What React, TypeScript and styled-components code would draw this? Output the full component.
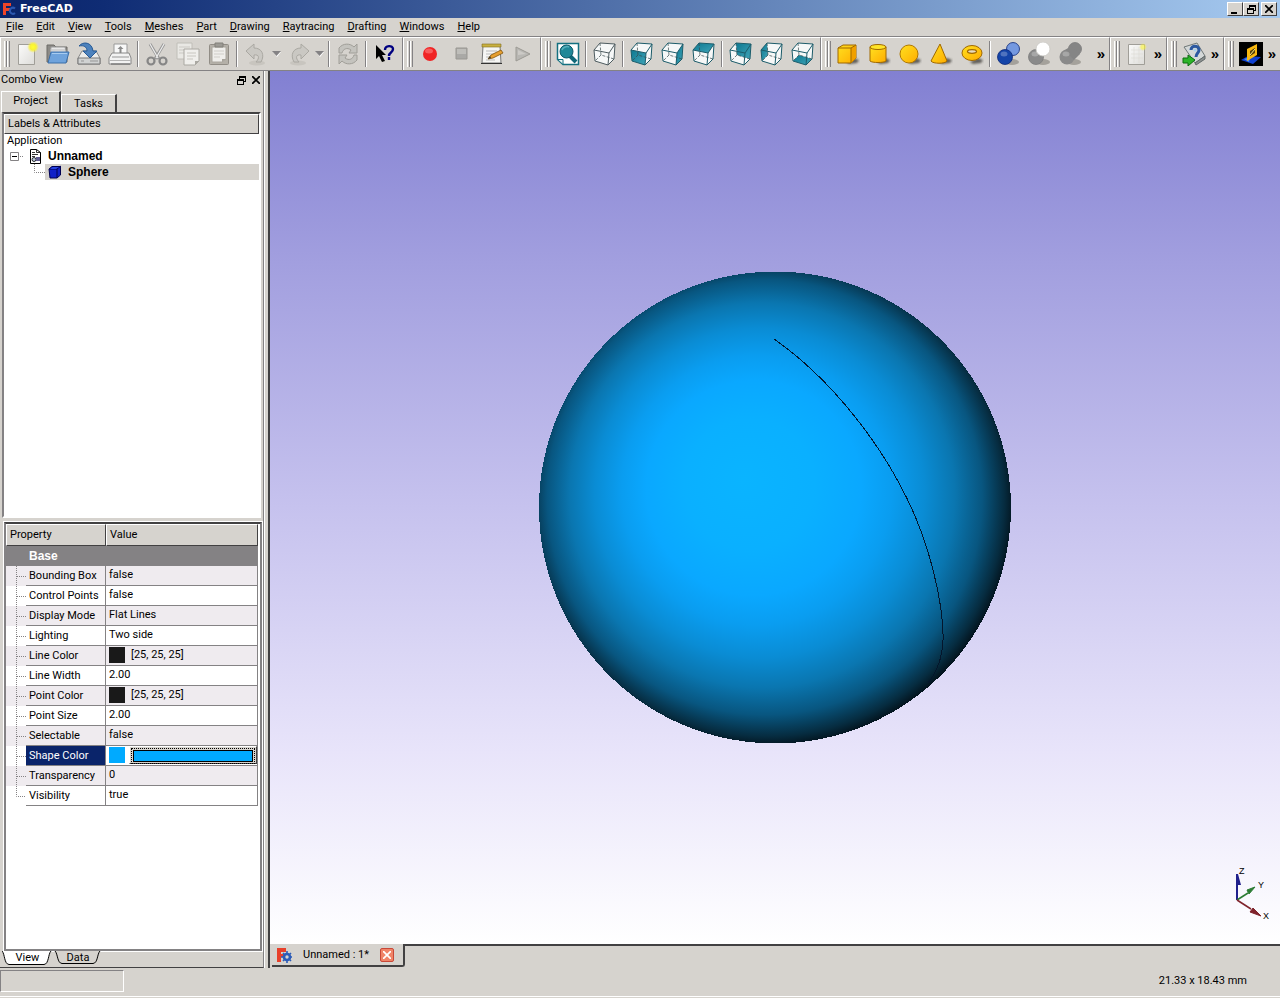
import React from "react";
import styled, { createGlobalStyle, css } from "styled-components";

const face = "#d6d3ce";
const shade = "#848284";
const dark = "#424142";
const navy = "#0a246a";

const GlobalStyle = createGlobalStyle`
  * { box-sizing: border-box; }
  body { margin: 0; background: ${face}; }
  body, button, table { font-family: Roboto, "Liberation Sans", sans-serif; font-size: 11px; line-height: 16px; color: #000; }
  button { margin: 0; padding: 0; border: 0; background: none; }
  svg { display: block; flex: none; }
`;

const Window = styled.div`
  display: flex;
  flex-direction: column;
  min-height: 100vh;
  background: ${face};
`;

const TitleBar = styled.header`
  display: flex;
  align-items: center;
  height: 18px;
  padding: 0 3px 0 2px;
  gap: 4px;
  background: linear-gradient(90deg, #0a246a 0%, #0f2c74 8%, #a6caf0 100%);
`;

const AppTitle = styled.h1`
  flex: 1;
  margin: 0;
  font: bold 11px/18px "DejaVu Sans", sans-serif;
  color: #fff;
`;

const WindowButtons = styled.div`
  display: flex;
`;

const WindowButton = styled.button<{ $apart?: boolean }>`
  display: grid;
  place-items: center;
  width: 16px;
  height: 14px;
  margin-left: ${(p) => (p.$apart ? 2 : 0)}px;
  background: ${face};
  border: 1px solid;
  border-color: #fff ${dark} ${dark} #fff;
`;

const MenuBar = styled.nav`
  display: flex;
  height: 18px;
  padding-left: 6px;
  gap: 13px;
`;

const MenuButton = styled.button`
  height: 18px;
  line-height: 18px;
  &::first-letter { text-decoration: underline; }
`;

const ToolbarArea = styled.div`
  display: flex;
  height: 35px;
  border-top: 1px solid ${shade};
  border-bottom: 1px solid ${shade};
`;

const ToolGroup = styled.div<{ $grow?: boolean }>`
  display: flex;
  align-items: center;
  flex: ${(p) => (p.$grow ? "1 0 auto" : "none")};
  padding-right: 2px;
  border-top: 1px solid #fff;
  border-left: 1px solid #fff;
  border-right: 1px solid ${shade};
  &:last-child { border-right: 0; }
`;

const Grip = styled.span`
  width: 6px;
  height: 26px;
  margin: 0 1px 0 3px;
  border: solid #fff;
  border-width: 0 0 0 1px;
  background: linear-gradient(90deg, ${face} 1px, ${shade} 1px 2px, #fff 2px 3px, ${face} 3px 4px, ${shade} 4px);
`;

const ToolButton = styled.button`
  display: grid;
  place-items: center;
  width: 31px;
  height: 30px;
`;

const DropButton = styled.button`
  display: grid;
  place-items: center;
  width: 12px;
  height: 30px;
`;

const MoreButton = styled.button`
  width: 12px;
  height: 30px;
  margin-left: auto;
  font: bold 15px/26px "Liberation Sans", sans-serif;
`;

const Separator = styled.span`
  width: 2px;
  height: 26px;
  margin: 0 2px;
  border-left: 1px solid ${shade};
  border-right: 1px solid #fff;
`;

const Workspace = styled.div`
  flex: 1;
  display: flex;
`;

const Dock = styled.aside`
  display: flex;
  flex-direction: column;
  width: 264px;
  flex: none;
  border-right: 1px solid ${shade};
  border-bottom: 1px solid ${dark};
`;

const DockTitle = styled.div`
  display: flex;
  align-items: center;
  height: 20px;
  padding: 0 3px 2px 1px;
  gap: 6px;
`;

const DockName = styled.h2`
  flex: 1;
  margin: 0;
  font-size: 11px;
  font-weight: 400;
  line-height: 18px;
`;

const DockTabs = styled.div`
  display: flex;
  align-items: flex-end;
  height: 21px;
  padding-left: 1px;
`;

const DockTab = styled.button<{ $active?: boolean }>`
  width: ${(p) => (p.$active ? 60 : 56)}px;
  height: ${(p) => (p.$active ? 21 : 18)}px;
  padding-bottom: ${(p) => (p.$active ? 2 : 0)}px;
  border: solid;
  border-width: 1px 2px 0 1px;
  border-color: #fff ${dark} ${face} #fff;
`;

const TreeFrame = styled.section`
  flex: 405 1 0;
  margin: 0 2px 0 2px;
  background: #fff;
  border: 2px solid;
  border-color: ${dark} #fff #fff ${shade};
`;

const TreeHeader = styled.div`
  height: 20px;
  padding-left: 3px;
  line-height: 18px;
  background: ${face};
  border: 1px solid;
  border-color: #fff ${dark} ${dark} #fff;
`;

const TreeList = styled.ul`
  margin: 0;
  padding: 0;
  list-style: none;
`;

const TreeRow = styled.li<{ $bold?: boolean }>`
  display: flex;
  align-items: center;
  height: ${(p) => (p.$bold ? 16 : 14)}px;
  padding-left: 3px;
  ${(p) => p.$bold && css`font: bold 12px/16px "Liberation Sans", sans-serif;`}
`;

const TreeLabel = styled.span<{ $selected?: boolean }>`
  display: flex;
  flex: 1;
  align-items: center;
  gap: 6px;
  padding-left: 3px;
  background: ${(p) => (p.$selected ? face : "transparent")};
`;

const PropertyFrame = styled.section`
  flex: 429 1 0;
  margin: 4px 1px 0 4px;
  padding-right: 1px;
  background: #fff;
  border: 2px solid;
  border-color: ${dark} ${shade} ${shade} ${shade};
  box-shadow: 0 0 0 1px #fff;
`;

const PropertyTable = styled.table`
  width: calc(100% - 1px);
  table-layout: fixed;
  border-collapse: separate;
  border-spacing: 0;
`;

const HeadCell = styled.th<{ $first?: boolean }>`
  width: ${(p) => (p.$first ? "100px" : "auto")};
  height: 22px;
  padding: 0 0 0 3px;
  font-weight: 400;
  text-align: left;
  background: ${face};
  border: 1px solid;
  border-color: #fff ${dark} ${dark} #fff;
`;

const GroupCell = styled.th`
  height: 20px;
  padding: 0 0 0 23px;
  font: bold 12px/16px "Liberation Sans", sans-serif;
  text-align: left;
  color: #fff;
  background: ${shade};
`;

const PropertyRow = styled.tr<{ $alt: boolean }>`
  background: ${(p) => (p.$alt ? "#efebef" : "#fff")};
`;

const NameCell = styled.th`
  height: 20px;
  padding: 0;
  font-weight: 400;
  text-align: left;
`;

const NameLine = styled.div`
  display: flex;
  height: 20px;
`;

const PropertyName = styled.span<{ $selected?: boolean }>`
  flex: 1;
  height: 20px;
  padding-left: 3px;
  line-height: 20px;
  white-space: nowrap;
  border-right: 1px solid ${shade};
  border-bottom: 1px solid ${shade};
  ${(p) =>
    p.$selected &&
    css`
      color: #fff;
      background: ${navy};
    `}
`;

const ValueCell = styled.td`
  height: 20px;
  padding: 0;
  border-right: 1px solid ${shade};
  border-bottom: 1px solid ${shade};
`;

const ValueLine = styled.div`
  display: flex;
  align-items: center;
  height: 19px;
  padding-left: 3px;
  line-height: 20px;
`;

const Swatch = styled.span<{ $color: string }>`
  width: 16px;
  height: 16px;
  margin-right: 6px;
  background: ${(p) => p.$color};
`;

const ColorButton = styled.button<{ $color: string }>`
  flex: 1;
  height: 18px;
  margin-left: -2px;
  padding: 3px;
  border: 1px solid;
  border-color: #fff ${dark} ${dark} #fff;
  background: ${face};
  &::before {
    content: "";
    display: block;
    height: 10px;
    background: ${(p) => p.$color};
    border: 1px solid #000;
    outline: 1px dotted #000;
    outline-offset: 1px;
  }
`;

const SheetTabs = styled.div`
  display: flex;
  height: 16px;
  padding-left: 2px;
`;

const SheetTab = styled.button<{ $active?: boolean }>`
  display: grid;
  width: ${(p) => (p.$active ? 51 : 50)}px;
  height: ${(p) => (p.$active ? 15 : 14)}px;
  > * { grid-area: 1 / 1; }
  > span { line-height: 14px; }
`;

const Splitter = styled.div`
  width: 6px;
  flex: none;
  border-left: 1px solid #fff;
  border-right: 2px solid ${dark};
`;

const Documents = styled.main`
  flex: 1;
  display: flex;
  flex-direction: column;
  min-width: 0;
`;

const Viewport = styled.div`
  position: relative;
  flex: 1;
  display: flex;
  align-items: center;
  justify-content: center;
  background: linear-gradient(#8280d2, #a29fdf 22%, #c6c2ee 50%, #e8e4fa 78%, #fff 100%);
`;

const AxisCross = styled.svg`
  position: absolute;
  right: 4px;
  bottom: 22px;
`;

const DocumentTabs = styled.div`
  display: flex;
  height: 24px;
  padding-left: 2px;
`;

const DocumentTab = styled.div`
  display: flex;
  align-items: center;
  width: 133px;
  height: 23px;
  padding-left: 4px;
  gap: 11px;
  border-right: 2px solid ${dark};
  border-bottom: 2px solid ${dark};
  border-radius: 0 0 3px 0;
`;

const DocumentTabFill = styled.div`
  flex: 1;
  border-top: 2px solid ${dark};
`;

const CloseButton = styled.button`
  display: grid;
  place-items: center;
  width: 14px;
  height: 14px;
  background: #f08468;
  border: 1px solid #c84838;
  border-radius: 2px;
`;

const StatusBar = styled.footer`
  display: flex;
  justify-content: space-between;
  align-items: center;
  height: 30px;
  padding: 2px 33px 5px 0;
  border-bottom: 1px solid ${face};
  box-shadow: inset 0 -1px 0 #fff;
`;

const StatusField = styled.div`
  width: 124px;
  height: 22px;
  border: 1px solid;
  border-color: ${shade} #fff #fff ${shade};
`;

/* ---------- icons ---------- */

const Icon = ({ children, size = 24 }: { children: React.ReactNode; size?: number }) => (
  <svg width={size} height={size} viewBox="0 0 24 24" aria-hidden="true">
    {children}
  </svg>
);

const AppLogo = ({ size = 15 }: { size?: number }) => (
  <svg width={size} height={size} viewBox="0 0 16 16" aria-hidden="true">
    <path d="M1 1h9v4H5v2h4v3H5v5H1z" fill="#e8402a" />
    <circle cx="11" cy="10" r="3" fill="none" stroke="#2c5cb8" strokeWidth="2.6" />
    <path d="M11 4v3M11 13v3M5 10h3M14 10h2M7 6l2 2M13 12l2 2M15 6l-2 2M7 14l2-2" stroke="#2c5cb8" strokeWidth="1.6" />
  </svg>
);

/* The title bar shows the mark as a red F with a dark blue ring. */
const TitleLogo = () => (
  <svg width="14" height="14" viewBox="0 0 14 14" aria-hidden="true">
    <path d="M1 1h8v3H4v2h4v3H4v4H1z" fill="#f04428" />
    <path d="M13 6.500a3 3 0 1 0 0 4.500" fill="none" stroke="#2c58b0" strokeWidth="2" />
  </svg>
);

const NewIcon = ({ faded }: { faded?: boolean }) => (
  <Icon>
    <defs>
      <radialGradient id="glow">
        <stop offset="0" stopColor="#ffff30" />
        <stop offset=".5" stopColor="#f8f038" />
        <stop offset="1" stopColor="#f8f060" stopOpacity="0" />
      </radialGradient>
      <linearGradient id="paper" x1="0" y1="0" x2="1" y2="1">
        <stop offset="0" stopColor="#fbfbfa" />
        <stop offset="1" stopColor="#dddcd9" />
      </linearGradient>
    </defs>
    <path d="M3.500 2.500h16v20h-16z" fill="url(#paper)" stroke="#a09e98" />
    {faded && <path d="M6 8h12M6 12h12M6 16h12M9 5v16M14 5v16" stroke="#dcdad4" strokeWidth=".6" />}
    <circle cx="18" cy="5" r={faded ? 4 : 6} fill="url(#glow)" opacity={faded ? 0.6 : 1} />
  </Icon>
);

const OpenIcon = () => (
  <Icon>
    <path d="M1 20V3h7l2 2h11v15z" fill="#8c8a86" stroke="#6c6a66" />
    <path d="M5 5h14l2 8H4z" fill="#e8e8e8" stroke="#9a9a9a" />
    <path d="M4 8h15" stroke="#bbb" />
    <path d="M5 10h18l-3 11H2z" fill="#6fa3dc" stroke="#3a6ea8" />
    <path d="M6 11.500h15" stroke="#a8ccf0" />
  </Icon>
);

const SaveIcon = () => (
  <Icon>
    <path d="M5 9h14l4 7v6H1v-6z" fill="#ececea" stroke="#888" />
    <path d="M1 16h22v6H1z" fill="#d0d2d2" stroke="#777" />
    <path d="M13 19h8M4 19h3" stroke="#959595" />
    <path d="M2 4C6-1 15 0 16 9h4l-7 7-7-7h4C10 5 7 3 2 4z" fill="#4d82bd" stroke="#275a96" />
  </Icon>
);

const PrintIcon = () => (
  <Icon>
    <path d="M6 12V2h13v10" fill="#f8f8f8" stroke="#999" />
    <path d="M12.500 4l3 3h-2v4h-2V7h-2z" fill="#8a8a8a" />
    <path d="M4 11h17l2 5v6H1v-6z" fill="#f2f2f2" stroke="#888" />
    <path d="M4 14h17v2H4z" fill="#c4c4c4" />
    <path d="M2 18.500h21" stroke="#b4b4b4" />
    <path d="M3 22h19" stroke="#666" />
  </Icon>
);

const CutIcon = () => (
  <Icon>
    <path d="M5 2l9 15M19 2l-9 15" stroke="#979797" strokeWidth="3" />
    <path d="M5 2l8 14M19 2l-8 14" stroke="#ededed" strokeWidth="1.200" />
    <circle cx="6" cy="19" r="3.500" fill="none" stroke="#868686" strokeWidth="2.200" />
    <circle cx="18" cy="19" r="3.500" fill="none" stroke="#868686" strokeWidth="2.200" />
  </Icon>
);

const CopyIcon = () => (
  <Icon>
    <path d="M1 1h15v16H1z" fill="#e9e8e4" stroke="#c0beb8" />
    <path d="M3 5h11M3 8h11M3 11h6" stroke="#cbc9c4" />
    <path d="M8 7h15v12l-4 4H8z" fill="#f0efec" stroke="#aaa8a2" />
    <path d="M11 11h9M11 14h9M11 17h6" stroke="#c8c6c0" />
    <path d="M23 19h-4v4z" fill="#aaa8a2" />
  </Icon>
);

const PasteIcon = () => (
  <Icon>
    <rect x="2.500" y="2.500" width="19" height="20" rx="1" fill="#b4b0a8" stroke="#918d86" />
    <path d="M5 5h14v12l-4 3H5z" fill="#efeeeb" stroke="#aaa69e" />
    <path d="M8 1h8v4H8z" fill="#9c9a94" stroke="#82807a" />
    <path d="M7 9h10M7 12h10M7 15h6" stroke="#cfcdc8" />
    <path d="M19 17h-4v3z" fill="#a8a49c" />
  </Icon>
);

const UndoIcon = ({ flip }: { flip?: boolean }) => (
  <Icon>
    <g transform={flip ? "translate(24 0) scale(-1 1)" : undefined}>
      <ellipse cx="13" cy="21" rx="8" ry="2.500" fill="#c8c5bf" />
      <path d="M2 9l8-7v4c8 0 11 7 7 14h-5c4-4 3-8-2-7v4z" fill="#cac8c3" stroke="#aaa8a2" />
    </g>
  </Icon>
);

const DropIcon = () => (
  <svg width="10" height="6" viewBox="0 0 10 6" aria-hidden="true">
    <path d="M1 1l4 5 4-5z" fill="#fff" />
    <path d="M0 0h9L4.500 5z" fill="#848284" />
  </svg>
);

const RefreshIcon = () => (
  <Icon>
    <path d="M3 11V6c4-5 11-5 15-1l3-3v9h-8l2-3c-4-3-8-1-9 3z" fill="#c4c3be" stroke="#a09e98" />
    <path d="M21 13v5c-4 5-11 5-15 1l-3 3v-9h8l-2 3c4 3 8 1 9-3z" fill="#c4c3be" stroke="#a09e98" />
  </Icon>
);

const HelpIcon = () => (
  <Icon>
    <path d="M3 3v14l3-3 3 6 3-1-3-6h4z" fill="#000" />
    <path d="M12 8c0-5 8-5 8-1 0 4-4 3-4 7M16 15v3" fill="none" stroke="#000080" strokeWidth="2.400" />
  </Icon>
);

const RecordIcon = () => (
  <Icon>
    <circle cx="12" cy="12" r="7" fill="#f02424" />
    <ellipse cx="11" cy="9" rx="4" ry="2.500" fill="#f85c5c" />
  </Icon>
);

const StopIcon = () => (
  <Icon>
    <path d="M7 6h11v11H7z" fill="#aaa9a6" stroke="#999792" />
    <path d="M8 7h9v5H8z" fill="#bfbeba" />
  </Icon>
);

const MacroIcon = () => (
  <Icon>
    <path d="M3 4h17l1 17H2z" fill="#f6f6f4" stroke="#777" />
    <path d="M2 2h19v3H2z" fill="#c8b040" stroke="#806c20" strokeWidth=".6" />
    <path d="M6 9h11M6 12h9M6 15h5M6 18h9" stroke="#bbb" />
    <path d="M1 21.500h21" stroke="#333" />
    <path d="M8 17l3-4 10-5 2 3-10 5z" fill="#e8a030" stroke="#80540c" strokeWidth=".8" />
    <path d="M8 17l2-3 1 2z" fill="#333" />
  </Icon>
);

const PlayIcon = () => (
  <Icon>
    <path d="M5 5l14 7-14 7z" fill="#b8b7b3" stroke="#9c9a94" />
    <path d="M7 8l8 4-8 1z" fill="#cccac6" />
  </Icon>
);

const FitIcon = () => (
  <Icon>
    <path d="M1.500 1.500h21v21H7l-5.500-5z" fill="#fff" stroke="#147080" strokeWidth="1.500" />
    <path d="M1.500 17.500H7v5z" fill="#e8f4f4" stroke="#147080" />
    <path d="M14 14l6 6" stroke="#106878" strokeWidth="4" />
    <circle cx="10.500" cy="9.500" r="6.500" fill="#208898" stroke="#0c5868" />
    <path d="M6 8c1-3 5-4 7-3" fill="none" stroke="#58b0bc" strokeWidth="1.500" />
  </Icon>
);

const cubeFaces = {
  front: "M1 8 16 11 15 23 2 19z",
  right: "M16 11 22 2 21 17 15 23z",
  top: "M1 8 7 1 22 2 16 11z",
  rear: "M7 1 22 2 21 17 8 13z",
  left: "M1 8 7 1 8 13 2 19z",
  bottom: "M2 19 8 13 21 17 15 23z",
};

/* A wireframe cube with one face filled. */
const ViewCube = ({ side }: { side?: keyof typeof cubeFaces }) => (
  <Icon>
    <defs>
      <linearGradient id="teal" x1="0" y1="0" x2="1" y2="1">
        <stop offset="0" stopColor="#0c7890" />
        <stop offset="1" stopColor="#40a4b8" />
      </linearGradient>
    </defs>
    <path d="M1 8 7 1 22 2 21 17 15 23 2 19z" fill="#f6f8f8" />
    {side && <path d={cubeFaces[side]} fill="url(#teal)" />}
    <path d="M7 1 8 13 21 17M8 13 2 19" fill="none" stroke="#36474a" strokeWidth=".7" strokeDasharray="3 1.500" />
    <path
      d="M1 8 7 1 22 2 21 17 15 23 2 19zM1 8 16 11 22 2M16 11 15 23"
      fill="none"
      stroke={side ? "#1c5c6a" : "#4e5c60"}
    />
  </Icon>
);

const PartDefs = () => (
  <defs>
    <linearGradient id="gold" x1="0" y1="0" x2="1" y2="1">
      <stop offset="0" stopColor="#ffe020" />
      <stop offset="1" stopColor="#ffac00" />
    </linearGradient>
    <filter id="soft" x="-20%" y="-20%" width="140%" height="140%">
      <feGaussianBlur stdDeviation=".8" />
    </filter>
  </defs>
);

const Shadow = () => <path d="M10 20l8-4 5 2-2 3-8 1z" fill="#44423e" opacity=".8" filter="url(#soft)" />;

const BoxIcon = () => (
  <Icon>
    <PartDefs />
    <Shadow />
    <path d="M2 6 7 3h13v13l-5 5H2z" fill="url(#gold)" stroke="#a06800" />
    <path d="M15 6l5-3v13l-5 5z" fill="#f0a000" />
    <path d="M2 6h13v15M15 6l5-3" fill="none" stroke="#a06800" />
  </Icon>
);

const CylinderIcon = () => (
  <Icon>
    <Shadow />
    <path d="M3 5v14c2 2 14 2 16 0V5z" fill="url(#gold)" stroke="#a06800" />
    <ellipse cx="11" cy="5" rx="8" ry="2.500" fill="#ffe428" stroke="#a06800" />
  </Icon>
);

const SphereIcon = () => (
  <Icon>
    <Shadow />
    <circle cx="11" cy="12" r="9" fill="url(#gold)" stroke="#b07800" />
  </Icon>
);

const ConeIcon = () => (
  <Icon>
    <Shadow />
    <path d="M11 2 2 19c2 3 14 3 16 0z" fill="url(#gold)" stroke="#a06800" />
  </Icon>
);

const TorusIcon = () => (
  <Icon>
    <Shadow />
    <ellipse cx="12" cy="11" rx="10" ry="7.500" fill="url(#gold)" stroke="#a06800" />
    <ellipse cx="12" cy="9.500" rx="4.500" ry="1.800" fill="#e8dcc0" stroke="#a06800" strokeWidth="1.300" />
  </Icon>
);

const BooleanIcon = ({ kind }: { kind: "union" | "cut" | "fuse" }) => {
  const back = kind === "union" ? "#7498e0" : kind === "cut" ? "#fff" : "#858585";
  const front = kind === "union" ? "#1444a8" : "#8a8a8a";
  const line = kind === "union" ? "#0c2878" : "#7c7c7c";
  return (
    <Icon>
      <ellipse cx="15" cy="20" rx="7" ry="3" fill="#a4a19b" />
      {kind !== "cut" && <circle cx="16" cy="7" r="6.500" fill={back} stroke={line} strokeWidth=".8" />}
      <circle cx="8" cy="15" r="7.500" fill={front} stroke={kind === "fuse" ? "none" : line} strokeWidth=".8" />
      {kind === "fuse" && <path d="M6 8l6-4 9 8-6 6z" fill="#858585" />}
      <ellipse cx="7" cy="12" rx="3.500" ry="2.500" fill="#fff" opacity=".25" />
      {kind === "cut" && <circle cx="15" cy="7" r="7" fill={back} stroke="#c8c6c2" strokeWidth=".8" />}
    </Icon>
  );
};

const ExportIcon = () => (
  <Icon>
    <path d="M2 5l13-4 8 13-10 7z" fill="#d4d8d8" stroke="#707878" />
    <path d="M13 21l10-7v3l-9 6z" fill="#8c9090" stroke="#606868" />
    <path d="M9 8c0-5 8-5 8 0 0 3-3 3-3 7" fill="none" stroke="#2c58a0" strokeWidth="3" />
    <circle cx="13" cy="8" r="1.500" fill="#a8d0f0" />
    <path d="M1 16h5v-3l7 5-7 6v-3H1z" fill="#2cb428" stroke="#0c6c10" />
  </Icon>
);

const DrawIcon = () => (
  <Icon>
    <path d="M0 0h24v24H0z" fill="#000" />
    <path d="M2 18l7-4 13 1-8 7z" fill="#1040d0" />
    <path d="M5 17 11 15 10 20z" fill="#4890f8" />
    <path d="M8 7 18 2v11L8 19z" fill="#f8b810" />
    <path d="M11 9 16 6v5l-5 3z" fill="#584008" />
    <path d="M11 13l5-6" stroke="#fff080" />
  </Icon>
);

const RestoreGlyph = () => (
  <svg width="9" height="9" viewBox="0 0 9 9" aria-hidden="true" shapeRendering="crispEdges">
    <path d="M2 0h7v6H7V5h1V2H3v1H2z" />
    <path d="M0 3h7v6H0zM1 5v3h5V5z" fillRule="evenodd" />
  </svg>
);

const CloseGlyph = ({ color = "#000" }: { color?: string }) => (
  <svg width="8" height="8" viewBox="0 0 8 8" aria-hidden="true">
    <path d="M0 0l8 8M8 0l-8 8" stroke={color} strokeWidth="1.700" />
  </svg>
);

const MinimizeGlyph = () => (
  <svg width="8" height="9" viewBox="0 0 8 9" aria-hidden="true">
    <path d="M0 7h6v2H0z" />
  </svg>
);

const ExpanderGlyph = () => (
  <svg width="19" height="16" viewBox="0 0 19 16" aria-hidden="true">
    <path d="M3.500 4.500h8v8h-8z" fill="#fff" stroke="#848284" />
    <path d="M5 8.500h5" stroke="#000" />
    <path d="M13 8.500h3" stroke="#848284" strokeDasharray="1 1" />
  </svg>
);

const DocumentGlyph = () => (
  <svg width="13" height="16" viewBox="0 0 13 16" aria-hidden="true">
    <path d="M1.500 1.500h6l4 3v11h-10z" fill="#fff" stroke="#000" />
    <path d="M7.500 1.500v3h4M3 4.500h3M3 6.500h6M3 8.500h3" fill="none" stroke="#000" strokeWidth=".8" />
    <circle cx="5" cy="11.500" r="2" fill="#b8c8d8" stroke="#000" strokeWidth=".8" />
    <path d="M7 9h4v4H7z" fill="#605c90" />
  </svg>
);

const BranchGlyph = () => (
  <svg width="38" height="16" viewBox="0 0 38 16" aria-hidden="true">
    <path d="M27.500 0v8.500H38" fill="none" stroke="#848284" strokeDasharray="1 1" />
  </svg>
);

const PartGlyph = () => (
  <svg width="14" height="14" viewBox="0 0 14 14" aria-hidden="true">
    <path d="M1 4 4 1.500h8.500V10L9 13H2z" fill="#1020c8" stroke="#000050" />
    <path d="M1 4h8v9M9 4l4-3" fill="none" stroke="#000050" />
    <path d="M2 4 5 2h6L8 4z" fill="#2844e0" />
  </svg>
);

const RowBranch = ({ last }: { last: boolean }) => (
  <svg width="20" height="20" viewBox="0 0 20 20" aria-hidden="true">
    <path d={last ? "M10.500 0v10.500H20" : "M10.500 0v20M11 10.500h9"} fill="none" stroke="#848284" strokeDasharray="1 1" />
  </svg>
);

const SheetShape = ({ active }: { active?: boolean }) => (
  <svg width={active ? 51 : 50} height={active ? 15 : 14} viewBox={active ? "0 0 51 15" : "0 0 50 14"} aria-hidden="true">
    <path
      d={active ? "M0 0C3 3 2 13 7 13.500H42C47 13 46 3 49 0" : "M2 0C5 3 4 12 9 12.500H40C45 12 44 3 47 0"}
      fill={active ? "#fff" : face}
      stroke="#000"
    />
  </svg>
);

/* ---------- scene ---------- */

const SphereModel = () => (
  <svg width="474" height="474" viewBox="0 0 474 474" role="img" aria-label="Sphere">
    <defs>
      <radialGradient id="ball" gradientUnits="userSpaceOnUse" cx="230" cy="229" r="250" fx="205" fy="208">
        <stop offset="0" stopColor="#0ab4ff" />
        <stop offset=".26" stopColor="#0ab0ff" />
        <stop offset=".43" stopColor="#0aa8ff" />
        <stop offset=".54" stopColor="#0a9df0" />
        <stop offset=".66" stopColor="#0a8cd4" />
        <stop offset=".77" stopColor="#0a76b0" />
        <stop offset=".87" stopColor="#085680" />
        <stop offset=".95" stopColor="#062c40" />
        <stop offset="1" stopColor="#020a10" />
      </radialGradient>
    </defs>
    <circle cx="237" cy="236.500" r="236" fill="url(#ball)" shapeRendering="crispEdges" />
    <path
      d="M236 68C292 107 347 175 377 245C397 292 406 344 405 370C404 390 398 402 390 412"
      fill="none"
      stroke="#04162c"
      shapeRendering="crispEdges"
    />
  </svg>
);

const AxisMarker = () => (
  <AxisCross width="40" height="60" viewBox="0 0 40 60" aria-label="Axes">
    <path d="M1 38V20" stroke="#20208c" strokeWidth="2" />
    <path d="M0 12h2l3 11h-7z" fill="#20208c" />
    <path d="M1 38l11-7" stroke="#2c7c34" strokeWidth="1.500" />
    <path d="M19 25l-8 3 2 4z" fill="#2c7c34" stroke="#2c7c34" />
    <path d="M1 38l14 9" stroke="#80242c" strokeWidth="1.500" />
    <path d="M25 54l-11-4 3-4z" fill="#80242c" stroke="#80242c" />
    <g fontFamily="Liberation Sans, sans-serif" fontSize="9" fill="#000">
      <text x="3" y="12">Z</text>
      <text x="22" y="26">Y</text>
      <text x="27" y="57">X</text>
    </g>
  </AxisCross>
);

/* ---------- data ---------- */

const menus = ["File", "Edit", "View", "Tools", "Meshes", "Part", "Drawing", "Raytracing", "Drafting", "Windows", "Help"];

type Property = { name: string; value: string; swatch?: string; selected?: boolean };

const properties: Property[] = [
  { name: "Bounding Box", value: "false" },
  { name: "Control Points", value: "false" },
  { name: "Display Mode", value: "Flat Lines" },
  { name: "Lighting", value: "Two side" },
  { name: "Line Color", value: "[25, 25, 25]", swatch: "#191919" },
  { name: "Line Width", value: "2.00" },
  { name: "Point Color", value: "[25, 25, 25]", swatch: "#191919" },
  { name: "Point Size", value: "2.00" },
  { name: "Selectable", value: "false" },
  { name: "Shape Color", value: "", swatch: "#00aaff", selected: true },
  { name: "Transparency", value: "0" },
  { name: "Visibility", value: "true" },
];

const Tool = ({ label, children }: { label: string; children: React.ReactNode }) => (
  <ToolButton type="button" aria-label={label}>
    {children}
  </ToolButton>
);

const More = () => (
  <MoreButton type="button" aria-label="More tools">
    »
  </MoreButton>
);

const Toolbars = () => (
  <ToolbarArea>
    <ToolGroup>
      <Grip />
      <Tool label="New"><NewIcon /></Tool>
      <Tool label="Open"><OpenIcon /></Tool>
      <Tool label="Save"><SaveIcon /></Tool>
      <Tool label="Print"><PrintIcon /></Tool>
      <Separator />
      <Tool label="Cut"><CutIcon /></Tool>
      <Tool label="Copy"><CopyIcon /></Tool>
      <Tool label="Paste"><PasteIcon /></Tool>
      <Separator />
      <Tool label="Undo"><UndoIcon /></Tool>
      <DropButton type="button" aria-label="Undo list"><DropIcon /></DropButton>
      <Tool label="Redo"><UndoIcon flip /></Tool>
      <DropButton type="button" aria-label="Redo list"><DropIcon /></DropButton>
      <Separator />
      <Tool label="Refresh"><RefreshIcon /></Tool>
      <Separator />
      <Tool label="What's this"><HelpIcon /></Tool>
    </ToolGroup>
    <ToolGroup>
      <Grip />
      <Tool label="Record macro"><RecordIcon /></Tool>
      <Tool label="Stop macro"><StopIcon /></Tool>
      <Tool label="Macros"><MacroIcon /></Tool>
      <Tool label="Run macro"><PlayIcon /></Tool>
    </ToolGroup>
    <ToolGroup>
      <Grip />
      <Tool label="Fit all"><FitIcon /></Tool>
      <Separator />
      <Tool label="Axonometric"><ViewCube /></Tool>
      <Separator />
      <Tool label="Front"><ViewCube side="front" /></Tool>
      <Tool label="Right"><ViewCube side="right" /></Tool>
      <Tool label="Top"><ViewCube side="top" /></Tool>
      <Separator />
      <Tool label="Rear"><ViewCube side="rear" /></Tool>
      <Tool label="Left"><ViewCube side="left" /></Tool>
      <Tool label="Bottom"><ViewCube side="bottom" /></Tool>
    </ToolGroup>
    <ToolGroup $grow>
      <Grip />
      <Tool label="Box"><BoxIcon /></Tool>
      <Tool label="Cylinder"><CylinderIcon /></Tool>
      <Tool label="Sphere"><SphereIcon /></Tool>
      <Tool label="Cone"><ConeIcon /></Tool>
      <Tool label="Torus"><TorusIcon /></Tool>
      <Separator />
      <Tool label="Boolean"><BooleanIcon kind="union" /></Tool>
      <Tool label="Cut shapes"><BooleanIcon kind="cut" /></Tool>
      <Tool label="Fuse shapes"><BooleanIcon kind="fuse" /></Tool>
      <More />
    </ToolGroup>
    <ToolGroup>
      <Grip />
      <Tool label="New drawing"><NewIcon faded /></Tool>
      <More />
    </ToolGroup>
    <ToolGroup>
      <Grip />
      <Tool label="Export"><ExportIcon /></Tool>
      <More />
    </ToolGroup>
    <ToolGroup>
      <Grip />
      <Tool label="Draft"><DrawIcon /></Tool>
      <More />
    </ToolGroup>
  </ToolbarArea>
);

const ComboView = () => (
  <Dock>
    <DockTitle>
      <DockName>Combo View</DockName>
      <button type="button" aria-label="Float"><RestoreGlyph /></button>
      <button type="button" aria-label="Close panel"><CloseGlyph /></button>
    </DockTitle>
    <DockTabs role="tablist">
      <DockTab type="button" role="tab" aria-selected $active>Project</DockTab>
      <DockTab type="button" role="tab" aria-selected={false}>Tasks</DockTab>
    </DockTabs>
    <TreeFrame>
      <TreeHeader>Labels &amp; Attributes</TreeHeader>
      <TreeList>
        <TreeRow>Application</TreeRow>
        <TreeRow $bold>
          <ExpanderGlyph />
          <TreeLabel><DocumentGlyph />Unnamed</TreeLabel>
        </TreeRow>
        <TreeRow $bold>
          <BranchGlyph />
          <TreeLabel $selected><PartGlyph />Sphere</TreeLabel>
        </TreeRow>
      </TreeList>
    </TreeFrame>
    <PropertyFrame>
      <PropertyTable>
        <thead>
          <tr>
            <HeadCell scope="col" $first>Property</HeadCell>
            <HeadCell scope="col">Value</HeadCell>
          </tr>
        </thead>
        <tbody>
          <tr>
            <GroupCell colSpan={2}>Base</GroupCell>
          </tr>
          {properties.map((p, i) => (
            <PropertyRow key={p.name} $alt={i % 2 === 0 && !p.selected}>
              <NameCell scope="row">
                <NameLine>
                  <RowBranch last={i === properties.length - 1} />
                  <PropertyName $selected={p.selected}>{p.name}</PropertyName>
                </NameLine>
              </NameCell>
              <ValueCell>
                <ValueLine>
                  {p.swatch && <Swatch $color={p.swatch} />}
                  {p.selected ? <ColorButton type="button" aria-label="Choose shape color" $color="#00aaff" /> : p.value}
                </ValueLine>
              </ValueCell>
            </PropertyRow>
          ))}
        </tbody>
      </PropertyTable>
    </PropertyFrame>
    <SheetTabs role="tablist">
      <SheetTab type="button" role="tab" aria-selected $active><SheetShape active /><span>View</span></SheetTab>
      <SheetTab type="button" role="tab" aria-selected={false}><SheetShape /><span>Data</span></SheetTab>
    </SheetTabs>
  </Dock>
);

export default function App() {
  return (
    <Window>
      <GlobalStyle />
      <TitleBar>
        <TitleLogo />
        <AppTitle>FreeCAD</AppTitle>
        <WindowButtons>
          <WindowButton type="button" aria-label="Minimize"><MinimizeGlyph /></WindowButton>
          <WindowButton type="button" aria-label="Restore"><RestoreGlyph /></WindowButton>
          <WindowButton type="button" aria-label="Close" $apart><CloseGlyph /></WindowButton>
        </WindowButtons>
      </TitleBar>
      <MenuBar>
        {menus.map((m) => (
          <MenuButton key={m} type="button">{m}</MenuButton>
        ))}
      </MenuBar>
      <Toolbars />
      <Workspace>
        <ComboView />
        <Splitter />
        <Documents>
          <Viewport>
            <SphereModel />
            <AxisMarker />
          </Viewport>
          <DocumentTabs>
            <DocumentTab>
              <AppLogo size={16} />
              <span>Unnamed : 1*</span>
              <CloseButton type="button" aria-label="Close document"><CloseGlyph color="#fff" /></CloseButton>
            </DocumentTab>
            <DocumentTabFill />
          </DocumentTabs>
        </Documents>
      </Workspace>
      <StatusBar>
        <StatusField />
        <span>21.33 x 18.43 mm</span>
      </StatusBar>
    </Window>
  );
}
